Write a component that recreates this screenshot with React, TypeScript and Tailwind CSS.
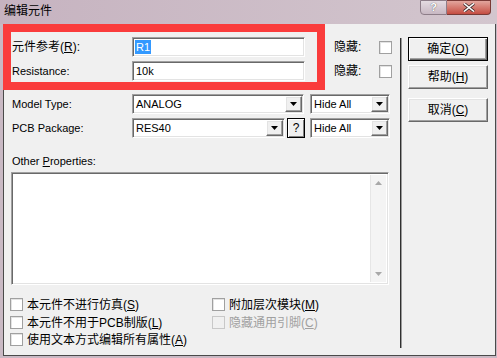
import React from "react";

const sunken =
  "bg-white border border-t-[#a0a0a0] border-l-[#a0a0a0] border-r-white border-b-white shadow-[inset_1px_1px_0_#696969,inset_-1px_-1px_0_#e3e3e3]";
const raised =
  "bg-[#f0f0f0] border border-t-white border-l-white border-r-[#696969] border-b-[#696969] shadow-[inset_-1px_-1px_0_#a0a0a0,inset_1px_1px_0_#e3e3e3]";

function Arrow({ color = "#000" }: { color?: string }) {
  return (
    <svg width="7" height="4" viewBox="0 0 7 4">
      <path d="M0 0h7L3.5 4z" fill={color} />
    </svg>
  );
}

function Select({ value, width }: { value: string; width: string }) {
  return (
    <div className={`${sunken} ${width} h-[20px] flex items-center pl-[3px] pr-[1px]`}>
      <span className="flex-1">{value}</span>
      <div className={`${raised} w-[17px] h-[16px] flex items-center justify-center`}>
        <Arrow />
      </div>
    </div>
  );
}

function Checkbox({ disabled }: { disabled?: boolean }) {
  return (
    <div
      className={`w-[13px] h-[13px] border ${
        disabled ? "border-[#c8c8c8] bg-[#f0f0f0]" : "border-[#a0a0a0] bg-white shadow-[inset_1px_1px_0_#e3e3e3]"
      }`}
    />
  );
}

function Check({ text, disabled }: { text: React.ReactNode; disabled?: boolean }) {
  return (
    <div className={`flex items-center gap-[4px] h-[13px] ${disabled ? "text-[#a0a0a0]" : ""}`}>
      <Checkbox disabled={disabled} />
      <span className="text-[12px] leading-none">{text}</span>
    </div>
  );
}

function Button({ children, primary }: { children: React.ReactNode; primary?: boolean }) {
  return (
    <div
      className={`w-[80px] h-[24px] flex items-center justify-center text-[12px] ${
        primary
          ? "bg-[#f0f0f0] border border-black shadow-[inset_1px_1px_0_white,inset_-1px_-1px_0_#696969,inset_-2px_-2px_0_#a0a0a0]"
          : raised
      }`}
    >
      {children}
    </div>
  );
}

export default function App() {
  return (
    <div className="w-[497px] h-[358px] relative overflow-hidden flex flex-col bg-[#c9b9c4] text-black text-[11px] font-['Liberation_Sans','Noto_Sans_CJK_SC',sans-serif]">
      {/* title bar */}
      <div className="h-[24px] flex items-start bg-gradient-to-r from-[#c6b3c0] to-[#d3c6ce]">
        <span className="pl-[4px] pt-[3px] text-[12px] leading-[16px]">编辑元件</span>
        <div className="ml-auto mr-[6px] flex">
          <div className="w-[27px] h-[15px] rounded-bl-[4px] border border-[#8d7d88] bg-gradient-to-b from-[#e4dbe1] to-[#c8b8c3] flex items-center justify-center text-[11px] font-bold text-white [text-shadow:0_0_1px_#333] leading-none">
            ?
          </div>
          <div className="w-[44px] h-[15px] rounded-br-[4px] border border-l-0 border-[#7a3a36] bg-gradient-to-b from-[#e2a59d] to-[#c44c42] flex items-center justify-center">
            <svg width="12" height="9" viewBox="0 0 12 9">
              <path d="M1 0.5L11 8.5M11 0.5L1 8.5" stroke="#3a2a2a" strokeWidth="3" />
              <path d="M1 0.5L11 8.5M11 0.5L1 8.5" stroke="white" strokeWidth="1.6" />
            </svg>
          </div>
        </div>
      </div>

      {/* body */}
      <div className="ml-[3px] w-[493px] h-[332px] bg-[#f0f0f0] border-l border-r border-b border-[#4a4a4a] flex">
        <div className="w-[396px] pl-[8px] pt-[13px] flex flex-col">
          <div className="flex items-center h-[20px]">
            <span className="w-[120px] text-[12px]">元件参考(<u>R</u>):</span>
            <div className={`${sunken} w-[173px] h-[20px] flex items-center pl-[2px]`}>
              <span className="bg-[#3399ff] text-white px-[1px] leading-[14px]">R1</span>
            </div>
            <span className="ml-[29px] w-[45px] text-[12px]">隐藏:</span>
            <Checkbox />
          </div>
          <div className="flex items-center h-[20px] mt-[4px]">
            <span className="w-[120px]">Resistance:</span>
            <div className={`${sunken} w-[173px] h-[20px] flex items-center pl-[3px]`}>10k</div>
            <span className="ml-[29px] w-[45px] text-[12px]">隐藏:</span>
            <Checkbox />
          </div>

          <div className="flex items-center h-[20px] mt-[13px]">
            <span className="w-[120px]">Model Type:</span>
            <Select value="ANALOG" width="w-[172px]" />
            <div className="ml-[6px]">
              <Select value="Hide All" width="w-[80px]" />
            </div>
          </div>
          <div className="flex items-center h-[20px] mt-[4px]">
            <span className="w-[120px]">PCB Package:</span>
            <Select value="RES40" width="w-[153px]" />
            <div className="ml-[2px] w-[18px] h-[20px] border border-black bg-[#f0f0f0] shadow-[inset_1px_1px_0_white,inset_-1px_-1px_0_#808080] flex items-center justify-center text-[12px]">
              ?
            </div>
            <div className="ml-[5px]">
              <Select value="Hide All" width="w-[80px]" />
            </div>
          </div>

          <div className="mt-[16px] h-[14px] leading-[14px]">
            Other <u>P</u>roperties:
          </div>
          <div className={`${sunken} mt-[4px] -ml-[1px] w-[378px] h-[113px] flex justify-end p-[2px]`}>
            <div className="w-[16px] h-full bg-[#f4f4f4] border-l border-[#e6e6e6] flex flex-col items-center justify-between py-[6px]">
              <div className="rotate-180">
                <Arrow color="#a8a8a8" />
              </div>
              <Arrow color="#a8a8a8" />
            </div>
          </div>

          <div className="mt-[13px] -ml-[2px] flex">
            <div className="w-[202px] flex flex-col">
              <Check text={<>本元件不进行仿真(<u>S</u>)</>} />
              <div className="mt-[5px]">
                <Check text={<>本元件不用于PCB制版(<u>L</u>)</>} />
              </div>
              <div className="mt-[4px]">
                <Check text={<>使用文本方式编辑所有属性(<u>A</u>)</>} />
              </div>
            </div>
            <div className="flex flex-col">
              <Check text={<>附加层次模块(<u>M</u>)</>} />
              <div className="mt-[5px]">
                <Check disabled text={<>隐藏通用引脚(<u>C</u>)</>} />
              </div>
            </div>
          </div>
        </div>

        <div className="mt-[14px] h-[310px] flex">
          <div className="w-[1px] bg-[#303030]" />
          <div className="w-[1px] bg-[#9a9a9a]" />
        </div>

        <div className="ml-[6px] pt-[13px] flex flex-col">
          <Button primary>
            确定(<u>O</u>)
          </Button>
          <div className="mt-[4px]">
            <Button>
              帮助(<u>H</u>)
            </Button>
          </div>
          <div className="mt-[9px]">
            <Button>
              取消(<u>C</u>)
            </Button>
          </div>
        </div>
      </div>
      <div className="flex-1" />

      {/* red annotation box */}
      <div className="absolute left-[3px] top-[24px] w-[322px] h-[66px] border-[8px] border-[#fa3c3c] pointer-events-none" />
    </div>
  );
}
